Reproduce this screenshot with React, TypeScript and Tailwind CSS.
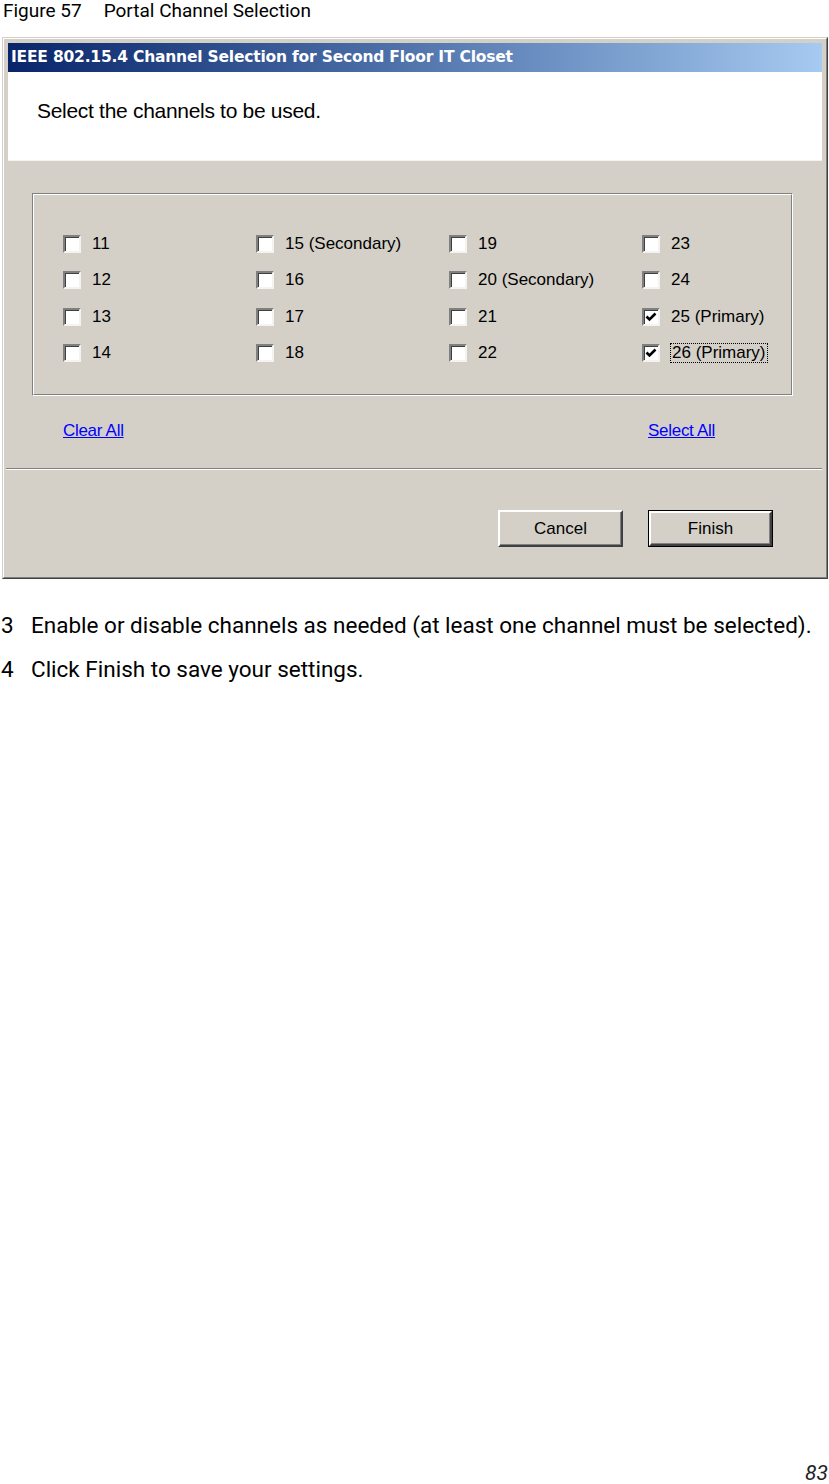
import React from 'react';

type Channel = { label: string; checked?: boolean; focused?: boolean };

// four columns, top to bottom
const columns: Channel[][] = [
  [{ label: '11' }, { label: '12' }, { label: '13' }, { label: '14' }],
  [{ label: '15 (Secondary)' }, { label: '16' }, { label: '17' }, { label: '18' }],
  [{ label: '19' }, { label: '20 (Secondary)' }, { label: '21' }, { label: '22' }],
  [
    { label: '23' },
    { label: '24' },
    { label: '25 (Primary)', checked: true },
    { label: '26 (Primary)', checked: true, focused: true },
  ],
];

const CheckBox = ({ checked }: { checked?: boolean }) => (
  <span className="relative inline-block w-[18px] h-[18px] shrink-0 bg-white border-2 border-t-[#808080] border-l-[#808080] border-r-[#f4f3f0] border-b-[#f4f3f0] shadow-[inset_1px_1px_0_#404040]">
    {checked && (
      <svg className="absolute left-0 top-0" width="14" height="14" viewBox="0 0 14 14">
        <polyline points="2.5,6.5 5.5,9.5 11.5,3.5" fill="none" stroke="#000" strokeWidth="2.6" />
      </svg>
    )}
  </span>
);

const Button = ({ label, isDefault }: { label: string; isDefault?: boolean }) => (
  <div
    className={
      isDefault
        ? 'w-[125px] h-[37px] border border-black'
        : 'w-[125px] h-[37px]'
    }
  >
    <div className="w-full h-full flex items-center justify-center bg-[#d4d0c8] border-2 border-t-white border-l-white border-r-[#404040] border-b-[#404040] shadow-[inset_-1px_-1px_0_#808080] text-[17px] text-black">
      {label}
    </div>
  </div>
);

export default function App() {
  return (
    <div className="w-[829px] h-[1484px] bg-white flex flex-col font-['Roboto',sans-serif] text-black">
      <div className="pl-[3px] h-[21px] text-[19px] leading-[21px] flex">
        <span>Figure 57</span>
        <span className="ml-[22px]">Portal Channel Selection</span>
      </div>

      {/* dialog */}
      <div className="ml-[2px] mt-[16px] w-[826px] h-[542px] border border-t-[#d4d0c8] border-l-[#d4d0c8] border-r-[#404040] border-b-[#404040] bg-[#d4d0c8] font-['Liberation_Sans',Arial,sans-serif]">
        <div className="h-full border border-t-white border-l-white border-r-[#808080] border-b-[#808080] flex flex-col pt-[4px]">
          <div className="mx-[4px] h-[29px] bg-gradient-to-r from-[#0a246a] to-[#a6caf0] flex items-center pl-[3px] text-white font-bold text-[15.5px] font-['DejaVu_Sans',sans-serif] tracking-[-0.2px]">
            IEEE 802.15.4 Channel Selection for Second Floor IT Closet
          </div>
          <div className="mx-[4px] h-[89px] bg-white border-b border-[#f4f3f0] pl-[29px] pt-[27px] text-[21px] leading-[24px] tracking-[-0.3px]">
            Select the channels to be used.
          </div>

          {/* group box */}
          <div className="ml-[28px] mt-[32px] w-[761px] h-[203px] border border-t-[#808080] border-l-[#808080] border-r-white border-b-white">
            <div className="h-full border border-t-white border-l-white border-r-[#808080] border-b-[#808080] grid grid-cols-[193px_193px_193px_1fr] pl-[29px] pt-[40px]">
              {columns.map((col, ci) => (
                <div key={ci} className="flex flex-col gap-[18.3px]">
                  {col.map((ch) => (
                    <div key={ch.label} className="flex items-center h-[18px] gap-[11px] text-[17px]">
                      <CheckBox checked={ch.checked} />
                      <span
                        className={
                          ch.focused
                            ? 'leading-[18px] px-[1px] outline-1 outline-dotted outline-black'
                            : 'leading-[18px]'
                        }
                      >
                        {ch.label}
                      </span>
                    </div>
                  ))}
                </div>
              ))}
            </div>
          </div>

          <div className="mt-[25px] flex justify-between pl-[59px] pr-[111px] text-[17px] leading-[20px] tracking-[-0.3px]">
            <span className="text-[#0000ff] underline">Clear All</span>
            <span className="text-[#0000ff] underline">Select All</span>
          </div>

          <div className="mt-[27px] ml-[2px] mr-[4px] h-[2px] border-t border-t-[#808080] border-b border-b-white" />

          <div className="mt-[40px] flex justify-end gap-[25px] pr-[53px]">
            <Button label="Cancel" />
            <Button label="Finish" isDefault />
          </div>
        </div>
      </div>

      <div className="mt-[35px] flex text-[22.5px] leading-[23px]">
        <span className="w-[31px] pl-[1px]">3</span>
        <span>Enable or disable channels as needed (at least one channel must be selected).</span>
      </div>
      <div className="mt-[21px] flex text-[22.5px] leading-[23px]">
        <span className="w-[31px] pl-[1px]">4</span>
        <span>Click Finish to save your settings.</span>
      </div>

      <div className="mt-auto self-end pr-[1px] text-[21px] leading-[22px] italic text-[#222]">83</div>
    </div>
  );
}
